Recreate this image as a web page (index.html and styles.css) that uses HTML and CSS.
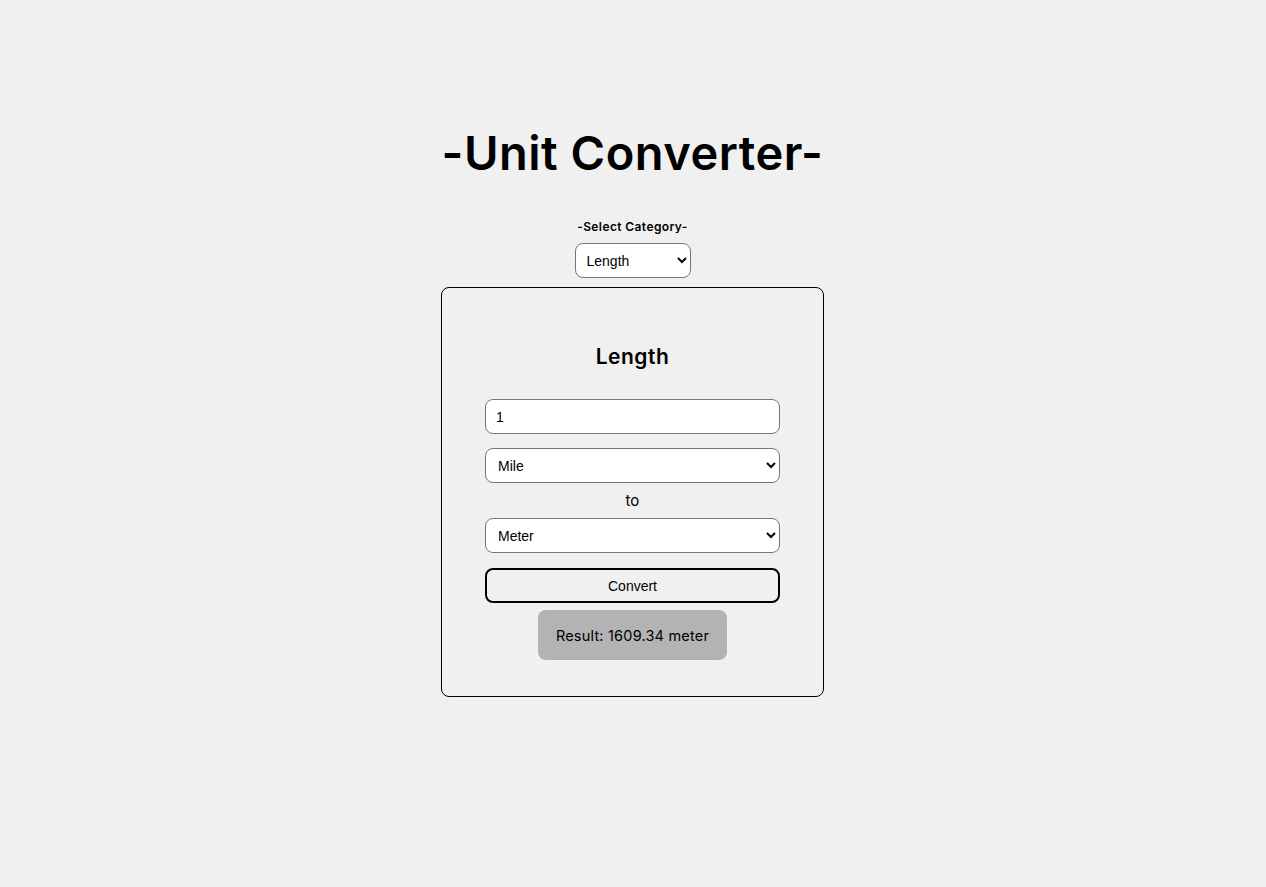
FILE: index.html
```html
<!DOCTYPE html>
<html lang="en">
<head>
<meta charset="utf-8">
<title>Unit Converter</title>
<link rel="stylesheet" href="styles.css">
</head>
<body>
<main class="page">
  <h1 class="title">-Unit Converter-</h1>
  <label class="cat-label" for="category">-Select Category-</label>
  <select id="category" class="cat-select">
    <option>Length</option>
    <option>Weight</option>
    <option>Temperature</option>
  </select>
  <section class="card">
    <h2 class="card-title">Length</h2>
    <input class="field" type="text" value="1">
    <select class="field field-select">
      <option>Mile</option>
      <option>Meter</option>
    </select>
    <div class="to">to</div>
    <select class="field field-select">
      <option>Meter</option>
      <option>Mile</option>
    </select>
    <button class="convert" type="button">Convert</button>
    <div class="result">Result: 1609.34 meter</div>
  </section>
</main>
</body>
</html>
```
FILE: styles.css
```css
html, body {
  margin: 0;
  padding: 0;
  background: #f0f0f0;
}
body {
  font-family: Inter, "Open Sans", sans-serif;
  color: #000;
}
.page {
  display: flex;
  flex-direction: column;
  align-items: center;
  padding-top: 124px;
  padding-right: 1px;
}
.title {
  margin: 0;
  font-size: 47px;
  line-height: 58px;
  font-weight: 600;
  letter-spacing: 0.5px;
}
.cat-label {
  margin-top: 37px;
  font-size: 12px;
  line-height: 16px;
  font-weight: 600;
  letter-spacing: 0.4px;
}
.cat-select {
  margin-top: 8px;
  width: 116px;
  height: 35px;
  box-sizing: border-box;
  border: 1px solid #767676;
  border-radius: 8px;
  background: #fff;
  font-family: "Liberation Sans", Arial, sans-serif;
  font-size: 14px;
  padding: 0 7px;
  color: #000;
}
.card {
  margin-top: 9px;
  width: 383px;
  box-sizing: border-box;
  border: 1px solid #000;
  border-radius: 8px;
  padding: 54px 43px 36px;
  display: flex;
  flex-direction: column;
  align-items: center;
}
.card-title {
  margin: 0;
  font-size: 21px;
  line-height: 30px;
  font-weight: 600;
  letter-spacing: 0.5px;
}
.field {
  width: 295px;
  height: 35px;
  box-sizing: border-box;
  border: 1px solid #767676;
  border-radius: 8px;
  background: #fff;
  font-family: "Liberation Sans", Arial, sans-serif;
  font-size: 14px;
  color: #000;
  padding: 0 10px;
}
input.field {
  margin-top: 27px;
}
.field-select {
  margin-top: 14px;
  padding: 0 8px;
}
.to + .field-select {
  margin-top: 0;
}
.to {
  height: 35px;
  display: flex;
  align-items: center;
  font-size: 15px;
}
.convert {
  margin-top: 15px;
  width: 295px;
  height: 35px;
  box-sizing: border-box;
  border: 2px solid #000;
  border-radius: 8px;
  background: transparent;
  font-family: "Liberation Sans", Arial, sans-serif;
  font-size: 14px;
  color: #000;
}
.result {
  margin-top: 7px;
  height: 50px;
  padding: 0 18px;
  display: flex;
  align-items: center;
  background: #b3b3b3;
  border-radius: 8px;
  font-size: 14.5px;
  letter-spacing: 0.2px;
}
```
